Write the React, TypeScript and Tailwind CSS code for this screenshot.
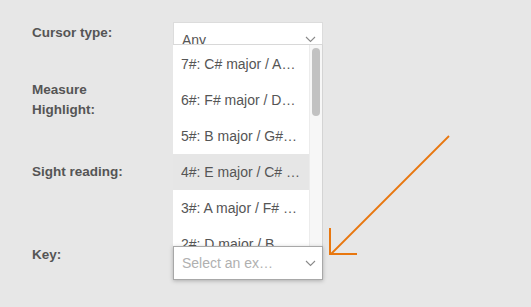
import React from "react";

const items = [
  "7#: C# major / A# minor",
  "6#: F# major / D# minor",
  "5#: B major / G# minor",
  "4#: E major / C# minor",
  "3#: A major / F# minor",
  "2#: D major / B minor",
];

function Chevron() {
  return (
    <svg width="11" height="7" viewBox="0 0 11 7" className="shrink-0">
      <path d="M1 1 L5.5 5.5 L10 1" fill="none" stroke="#8a8a8a" strokeWidth="1.1" />
    </svg>
  );
}

export default function App() {
  return (
    <div
      className="relative w-[531px] h-[307px] overflow-hidden bg-[#e7e7e7]"
      style={{ fontFamily: '"Liberation Sans", Arial, sans-serif' }}
    >
      <div className="flex pt-[22px] pl-8">
        <div className="w-[141px] flex flex-col text-[13.5px] leading-[20px] font-bold text-[#555]">
          <div className="mt-px">Cursor type:</div>
          <div className="mt-[37px]">
            Measure
            <br />
            Highlight:
          </div>
          <div className="mt-[42px]">Sight reading:</div>
          <div className="mt-[63px]">Key:</div>
        </div>
        <div className="w-[150px] flex flex-col">
          <div className="h-[34px] bg-white border border-[#dcdcdc] flex items-center justify-between pl-2 pr-[6px] text-[14px] text-[#555]">
            <span className="mt-[2px]">Any</span>
            <Chevron />
          </div>
          <div className="relative z-10 mt-[190px] h-[34px] bg-white border border-[#a8a8a8] shadow-[0_1px_4px_rgba(0,0,0,0.25)] flex items-center justify-between pl-2 pr-[6px] text-[14px] text-[#b0b0b0]">
            <span>Select an ex…</span>
            <Chevron />
          </div>
        </div>
      </div>

      <div className="absolute left-[173px] top-[44px] w-[150px] h-[202px] bg-white border-t border-[#d8d8d8] flex overflow-hidden">
        <div className="w-[136px] flex flex-col pt-px">
          {items.map((t, i) => (
            <div
              key={t}
              className={`h-[36px] shrink-0 flex items-center pl-2 pr-[8.6px] text-[14px] text-[#555] ${
                i === 3 ? "bg-[#e6e6e6]" : ""
              }`}
            >
              <span className="truncate">{t}</span>
            </div>
          ))}
        </div>
        <div className="w-[14px] bg-[#f7f7f7] border-l border-[#ececec] border-r border-r-[#d4d4d4] pt-[3px] flex justify-center">
          <div className="w-[8px] h-[68px] rounded-full bg-[#c2c2c2]" />
        </div>
      </div>

      <svg className="absolute left-0 top-0" width="531" height="307">
        <line x1="449" y1="136" x2="331" y2="254" stroke="#e8770f" strokeWidth="1.8" />
        <line x1="330" y1="228" x2="330" y2="255" stroke="#e8770f" strokeWidth="2" />
        <line x1="329" y1="254" x2="357" y2="254" stroke="#e8770f" strokeWidth="2" />
      </svg>
    </div>
  );
}
